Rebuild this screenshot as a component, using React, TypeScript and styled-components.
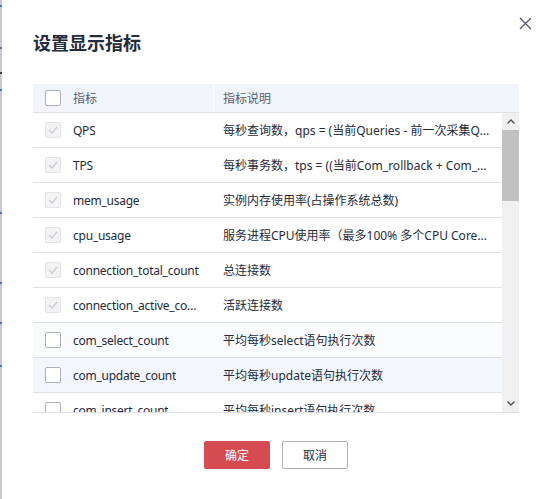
import React, { FC } from 'react';
import styled, { createGlobalStyle, css } from 'styled-components';

const font = `"Noto Sans", "Noto Sans CJK SC", sans-serif`;

const colors = {
  text: '#252b3a',
  textSub: '#575d6c',
  border: '#dfe1e6',
  headBg: '#f2f5fc',
  danger: '#d64a52',
};

const GlobalStyle = createGlobalStyle`
  html, body {
    margin: 0;
    padding: 0;
    background: #fff;
  }
  body {
    font-family: ${font};
    color: ${colors.text};
  }
`;

const Page = styled.div`
  width: 550px;
  height: 499px;
  display: flex;
  overflow: hidden;
  background: #fff;
`;

const Backdrop = styled.div`
  width: 2px;
  flex: none;
  background: linear-gradient(
    to bottom,
    #c8c9d0 0 5px, #4a6fd0 5px 7px, #c8c9d0 7px 47px, #4a6fd0 47px 49px,
    #c8c9d0 49px 72px, #3b3f4a 72px 74px, #c8c9d0 74px 89px, #4a6fd0 89px 91px,
    #c8c9d0 91px 212px, #4a6fd0 212px 214px, #c8c9d0 214px 282px, #4a6fd0 282px 284px,
    #c8c9d0 284px 322px, #4a6fd0 322px 324px, #c8c9d0 324px 365px, #4a6fd0 365px 367px,
    #c8c9d0 367px
  );
`;

const Dialog = styled.div`
  flex: 1;
  display: flex;
  flex-direction: column;
  padding: 0 31px 0 31px;
  position: relative;
`;

const Title = styled.h3`
  margin: 31px 0 0;
  font-family: ${font};
  font-size: 18px;
  font-weight: 700;
  line-height: 24px;
  color: ${colors.text};
`;

const Close = styled.button`
  position: absolute;
  top: 17px;
  right: 18px;
  width: 13px;
  height: 13px;
  padding: 0;
  border: 0;
  background: none;
  cursor: pointer;
  display: flex;
`;

const Table = styled.div`
  margin-top: 29px;
  display: flex;
  flex-direction: column;
`;

const HeadRow = styled.div`
  display: grid;
  grid-template-columns: 180px 1fr;
  height: 28px;
  background: ${colors.headBg};
  border-bottom: 1px solid ${colors.border};
`;

const HeadCell = styled.div<{ $divider?: boolean }>`
  display: flex;
  align-items: center;
  font-size: 12px;
  color: ${colors.textSub};
  ${(p) =>
    p.$divider &&
    css`
      border-left: 1px solid #fff;
      padding-left: 9px;
    `}
`;

const Body = styled.div`
  display: flex;
  height: 299px;
  overflow: hidden;
  border-bottom: 1px solid ${colors.border};
`;

const Rows = styled.div`
  flex: 1;
  min-width: 0;
`;

const Row = styled.div<{ $tone?: 'light' | 'hover' }>`
  display: grid;
  grid-template-columns: 180px 1fr;
  height: 34px;
  border-bottom: 1px solid ${colors.border};
  background: ${(p) =>
    p.$tone === 'hover' ? '#f3f6fc' : p.$tone === 'light' ? '#fafbfe' : '#fff'};
`;

const Cell = styled.div<{ $first?: boolean }>`
  display: flex;
  align-items: center;
  min-width: 0;
  font-size: 12px;
  color: ${colors.text};
  padding: ${(p) => (p.$first ? '0 11px 0 12px' : '0 12px 0 10px')};
`;

const Label = styled.span<{ $tight?: boolean }>`
  overflow: hidden;
  white-space: nowrap;
  text-overflow: ellipsis;
  letter-spacing: ${(p) => (p.$tight ? '-0.25px' : 'normal')};
`;

const Box = styled.span<{ $disabled?: boolean }>`
  flex: none;
  width: 16px;
  height: 16px;
  box-sizing: border-box;
  margin-right: 12px;
  border-radius: 2px;
  border: 1px solid ${(p) => (p.$disabled ? '#e3e4e8' : '#adb0b8')};
  background: ${(p) => (p.$disabled ? '#f3f3f5' : '#fff')};
  display: flex;
  align-items: center;
  justify-content: center;
`;

const Scrollbar = styled.div`
  width: 17px;
  flex: none;
  background: #f0f0f0;
  display: flex;
  flex-direction: column;
`;

const Arrow = styled.div`
  height: 17px;
  display: flex;
  align-items: center;
  justify-content: center;
`;

const Thumb = styled.div`
  height: 71px;
  background: #c1c1c1;
`;

const Track = styled.div`
  flex: 1;
`;

const Footer = styled.div`
  display: flex;
  justify-content: center;
  gap: 12px;
  margin-top: 28px;
`;

const Button = styled.button<{ $primary?: boolean }>`
  width: 66px;
  height: 28px;
  box-sizing: border-box;
  border-radius: 2px;
  font-family: ${font};
  font-size: 12px;
  cursor: pointer;
  ${(p) =>
    p.$primary
      ? css`
          background: ${colors.danger};
          border: 1px solid ${colors.danger};
          color: #fff;
        `
      : css`
          background: #fff;
          border: 1px solid #adb0b8;
          color: ${colors.text};
        `}
`;

type Metric = {
  name: string;
  desc: string;
  fixed: boolean;
  tone?: 'light' | 'hover';
};

const metrics: Metric[] = [
  { name: 'QPS', desc: '每秒查询数，qps = (当前Queries - 前一次采集Queries) / 采集间隔', fixed: true },
  { name: 'TPS', desc: '每秒事务数，tps = ((当前Com_rollback + Com_commit) - (前一次采集值)) / 采集间隔', fixed: true },
  { name: 'mem_usage', desc: '实例内存使用率(占操作系统总数)', fixed: true },
  { name: 'cpu_usage', desc: '服务进程CPU使用率（最多100% 多个CPU Core的情况下取平均值）', fixed: true },
  { name: 'connection_total_count', desc: '总连接数', fixed: true },
  { name: 'connection_active_count', desc: '活跃连接数', fixed: true },
  { name: 'com_select_count', desc: '平均每秒select语句执行次数', fixed: false, tone: 'light' },
  { name: 'com_update_count', desc: '平均每秒update语句执行次数', fixed: false, tone: 'hover' },
  { name: 'com_insert_count', desc: '平均每秒insert语句执行次数', fixed: false },
];

const Check: FC<{ disabled: boolean }> = ({ disabled }) => (
  <Box $disabled={disabled}>
    {disabled && (
      <svg width="10" height="8" viewBox="0 0 10 8">
        <path d="M1 4 L4 7 L9 1" fill="none" stroke="#c9cbd1" strokeWidth="1.2" />
      </svg>
    )}
  </Box>
);

const App: FC = (): JSX.Element => (
  <Page>
    <GlobalStyle />
    <Backdrop />
    <Dialog>
      <Close aria-label="close">
        <svg width="13" height="13" viewBox="0 0 13 13">
          <path d="M1 1 L12 12 M12 1 L1 12" stroke="#575d6c" strokeWidth="1.3" />
        </svg>
      </Close>
      <Title>设置显示指标</Title>
      <Table>
        <HeadRow>
          <Cell $first>
            <Check disabled={false} />
            <HeadCell>指标</HeadCell>
          </Cell>
          <HeadCell $divider>指标说明</HeadCell>
        </HeadRow>
        <Body>
          <Rows>
            {metrics.map((m) => (
              <Row key={m.name} $tone={m.tone}>
                <Cell $first>
                  <Check disabled={m.fixed} />
                  <Label $tight>{m.name}</Label>
                </Cell>
                <Cell>
                  <Label>{m.desc}</Label>
                </Cell>
              </Row>
            ))}
          </Rows>
          <Scrollbar>
            <Arrow>
              <svg width="8" height="5" viewBox="0 0 8 5">
                <path d="M0.5 4.5 L4 1 L7.5 4.5" fill="none" stroke="#505050" strokeWidth="1.4" />
              </svg>
            </Arrow>
            <Thumb />
            <Track />
            <Arrow>
              <svg width="8" height="5" viewBox="0 0 8 5">
                <path d="M0.5 0.5 L4 4 L7.5 0.5" fill="none" stroke="#505050" strokeWidth="1.4" />
              </svg>
            </Arrow>
          </Scrollbar>
        </Body>
      </Table>
      <Footer>
        <Button $primary>确定</Button>
        <Button>取消</Button>
      </Footer>
    </Dialog>
  </Page>
);

export default App;
